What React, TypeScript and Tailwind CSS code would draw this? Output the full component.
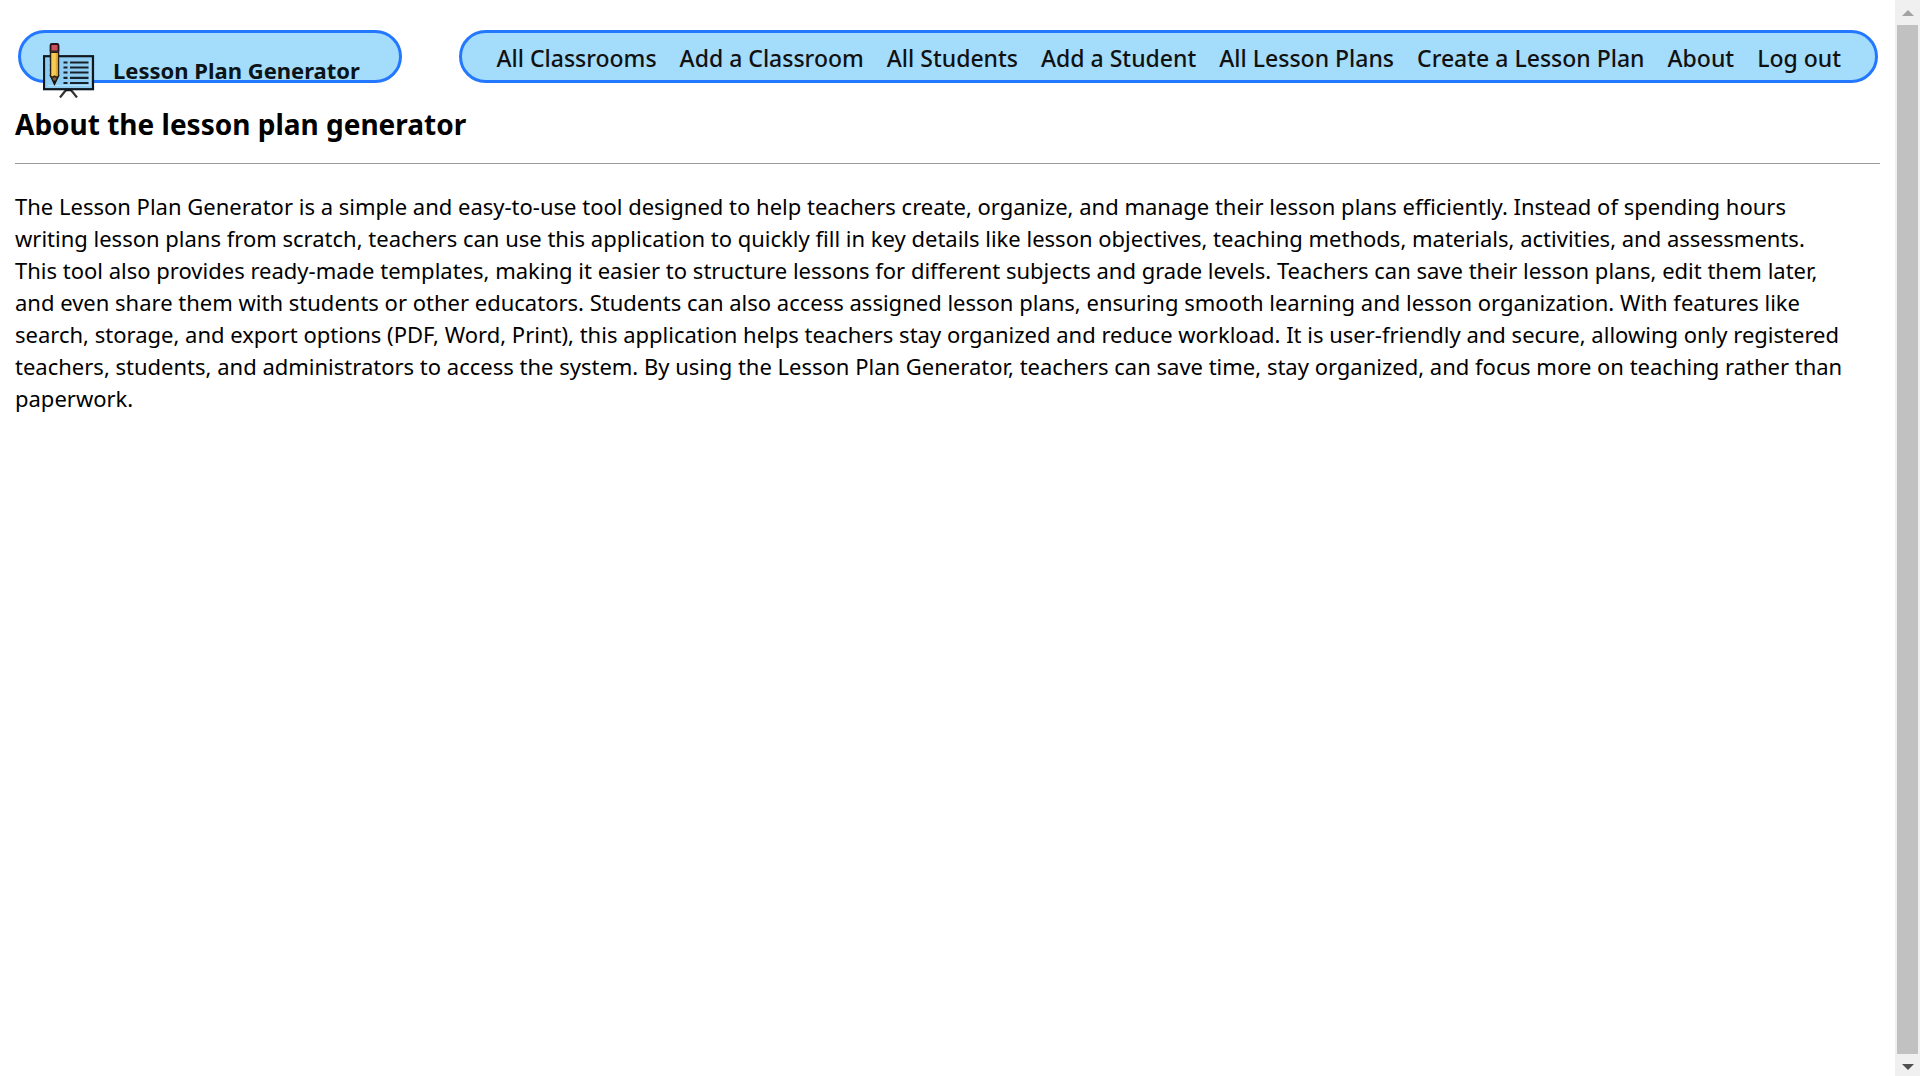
const links = [
  "All Classrooms",
  "Add a Classroom",
  "All Students",
  "Add a Student",
  "All Lesson Plans",
  "Create a Lesson Plan",
  "About",
  "Log out",
];

const lines = [
  "The Lesson Plan Generator is a simple and easy-to-use tool designed to help teachers create, organize, and manage their lesson plans efficiently. Instead of spending hours",
  "writing lesson plans from scratch, teachers can use this application to quickly fill in key details like lesson objectives, teaching methods, materials, activities, and assessments.",
  "This tool also provides ready-made templates, making it easier to structure lessons for different subjects and grade levels. Teachers can save their lesson plans, edit them later,",
  "and even share them with students or other educators. Students can also access assigned lesson plans, ensuring smooth learning and lesson organization. With features like",
  "search, storage, and export options (PDF, Word, Print), this application helps teachers stay organized and reduce workload. It is user-friendly and secure, allowing only registered",
  "teachers, students, and administrators to access the system. By using the Lesson Plan Generator, teachers can save time, stay organized, and focus more on teaching rather than",
  "paperwork.",
];

function BoardIcon() {
  return (
    <svg width="52" height="56" viewBox="0 0 52 56" fill="none" aria-hidden="true">
      <rect x="1" y="14.2" width="49" height="33" fill="#8fcdf2" stroke="#10181f" strokeWidth="2.2" />
      <path d="M5 43.5H47V18" stroke="#b5e2fb" strokeWidth="1.2" />
      <path d="M23 48L17 55.5M28 48L34 55.5" stroke="#333" strokeWidth="2.2" />
      <path d="M22 48H29" stroke="#10181f" strokeWidth="2.5" />
      <path
        d="M20.5 20.5h4M27 20.5h18.5M20.5 25.5h4M27 25.5h18.5M20.5 30.5h4M27 30.5h18.5M20.5 35.8h4M27 35.8h18.5M20.5 41h4M27 41h18.5"
        stroke="#17222b"
        strokeWidth="2.2"
      />
      <path d="M6 20.5h3M6 25.5h3M6 30.5h3" stroke="#f6e6a6" strokeWidth="1.6" />
      <path d="M7.5 34L11.5 42.5L15.5 34Z" fill="#7b5a3c" stroke="#171313" strokeWidth="1.3" />
      <path d="M10 38.5L11.5 42.5L13 38.5Z" fill="#171313" />
      <path d="M7.5 9H15.5V34L14 35.5L11.5 34L9 35.5L7.5 34Z" fill="#f5cd55" stroke="#2a2215" strokeWidth="1.5" />
      <path d="M13.5 10V34" stroke="#e0a93a" strokeWidth="1.4" />
      <rect x="7.5" y="2" width="8" height="8" rx="1.5" fill="#c9505c" stroke="#241416" strokeWidth="1.8" />
      <path d="M7.5 9.4h8" stroke="#3a2a2c" strokeWidth="2" />
    </svg>
  );
}

function Scrollbar() {
  return (
    <div className="flex w-[25px] shrink-0 flex-col items-center bg-[#f0f0f0]" aria-hidden="true">
      <div className="flex h-[25px] items-center">
        <svg width="12" height="6" viewBox="0 0 12 6">
          <path d="M0 6L6 0L12 6Z" fill="#a3a3a3" />
        </svg>
      </div>
      <div className="w-[21px] flex-1 bg-[#c1c1c1]" />
      <div className="flex h-[22px] items-center pt-1">
        <svg width="12" height="6" viewBox="0 0 12 6">
          <path d="M0 0L6 6L12 0Z" fill="#505050" />
        </svg>
      </div>
    </div>
  );
}

export default function App() {
  return (
    <div className="flex min-h-screen bg-white font-['Noto_Sans',sans-serif] text-black">
      <div className="min-w-0 flex-1 px-[15px] pt-[30px]">
        <header className="flex justify-between pr-0.5 pl-[3px]">
          <a
            href="#home"
            className="flex h-[53px] w-[384px] items-start gap-[18px] rounded-full border-[3px] border-[#2478ff] bg-[#a4dcfc] pt-[9px] pl-[22px]"
          >
            <BoardIcon />
            <span className="pt-3 text-[22px] leading-[32px] font-bold whitespace-nowrap text-[#0b1418]">
              Lesson Plan Generator
            </span>
          </a>
          <nav className="flex h-[53px] items-center gap-[23px] rounded-full border-[3px] border-[#2478ff] bg-[#a4dcfc] px-[34px] pt-0.5">
            {links.map((label) => (
              <a
                key={label}
                href="#nav"
                className="text-[23px] leading-[32px] font-medium whitespace-nowrap text-[#111]"
              >
                {label}
              </a>
            ))}
          </nav>
        </header>
        <main>
          <h1 className="mt-[21px] text-[28px] leading-[40px] font-bold">About the lesson plan generator</h1>
          <hr className="mt-[19px] border-t border-[#9a9a9a]" />
          <p className="mt-[26px] text-[22px] leading-[32px] whitespace-nowrap">
            {lines.map((line) => (
              <span key={line} className="block">
                {line}
              </span>
            ))}
          </p>
        </main>
      </div>
      <Scrollbar />
    </div>
  );
}
